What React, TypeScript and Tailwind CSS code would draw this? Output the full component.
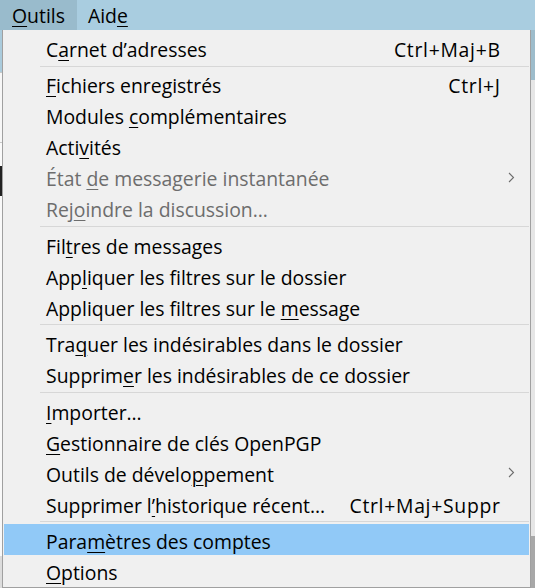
import React from "react";

type Item =
  | { sep: true }
  | {
      sep?: false;
      label: string;
      key: number; // index of the underlined letter
      shortcut?: string;
      disabled?: boolean;
      submenu?: boolean;
      active?: boolean;
    };

const items: Item[] = [
  { label: "Carnet d’adresses", key: 1, shortcut: "Ctrl+Maj+B" },
  { sep: true },
  { label: "Fichiers enregistrés", key: 0, shortcut: "Ctrl+J" },
  { label: "Modules complémentaires", key: 8 },
  { label: "Activités", key: 4 },
  { label: "État de messagerie instantanée", key: 5, disabled: true, submenu: true },
  { label: "Rejoindre la discussion…", key: 3, disabled: true },
  { sep: true },
  { label: "Filtres de messages", key: 3 },
  { label: "Appliquer les filtres sur le dossier", key: 3 },
  { label: "Appliquer les filtres sur le message", key: 29 },
  { sep: true },
  { label: "Traquer les indésirables dans le dossier", key: 3 },
  { label: "Supprimer les indésirables de ce dossier", key: 7 },
  { sep: true },
  { label: "Importer…", key: 0 },
  { label: "Gestionnaire de clés OpenPGP", key: 0 },
  { label: "Outils de développement", key: 16, submenu: true },
  { label: "Supprimer l’historique récent…", key: 11, shortcut: "Ctrl+Maj+Suppr" },
  { sep: true },
  { label: "Paramètres des comptes", key: 4, active: true },
  { label: "Options", key: 0 },
];

const Mnemonic = ({ text, at }: { text: string; at: number }) => (
  <>
    {text.slice(0, at)}
    <span className="underline decoration-1 underline-offset-[3px]">{text[at]}</span>
    {text.slice(at + 1)}
  </>
);

const Chevron = () => (
  <svg width="7" height="11" viewBox="0 0 7 11" className="text-[#6d6d6d]">
    <polyline points="1,1 5.5,5.5 1,10" fill="none" stroke="currentColor" strokeWidth="1.1" />
  </svg>
);

export default function App() {
  return (
    <div
      className="w-[535px] h-[588px] overflow-hidden bg-[#f0f0f0] text-[19.4px] text-black"
      style={{ fontFamily: '"Open Sans", "Noto Sans", sans-serif' }}
    >
      {/* barre de menus */}
      <div className="flex h-[30px] bg-[#a9cde0]">
        <div className="flex items-center px-[12px] pt-[2px] bg-[#99bbcc]">
          <Mnemonic text="Outils" at={0} />
        </div>
        <div className="flex items-center px-[11px] pt-[2px]">
          <Mnemonic text="Aide" at={3} />
        </div>
      </div>

      <div className="flex h-[558px]">
        {/* fenêtre derrière, à gauche */}
        <div className="w-[2px] flex flex-col">
          <div className="h-[42px] bg-[#aacbdc]" />
          <div className="h-[70px] bg-[#f7f7f7] border-t border-[#c8c8c8]" />
          <div className="h-[24px] bg-[#fafafa] border-t border-[#c8c8c8]" />
          <div className="h-[30px] bg-[#222]" />
          <div className="flex-1 bg-[#f9f9f9]" />
          <div className="h-[32px] bg-[#dcdcdc]" />
        </div>

        {/* menu déroulant */}
        <div className="w-[529px] border border-t-0 border-[#a0a0a0] bg-[#f0f0f0] pt-[2.5px] px-px">
          {items.map((it, i) =>
            it.sep ? (
              <div key={i} className="h-[5.4px] flex items-center pl-[36px]">
                <div className="h-px w-full bg-[#d7d7d7]" />
              </div>
            ) : (
              <div
                key={i}
                className={`h-[31px] flex items-center justify-between pl-[42px] pr-[29px] pt-[3px] whitespace-nowrap ${
                  it.active ? "bg-[#91c9f7]" : ""
                } ${it.disabled ? "text-[#6d6d6d]" : ""}`}
              >
                <span>
                  <Mnemonic text={it.label} at={it.key} />
                </span>
                {it.shortcut && <span className="tracking-[0.7px] -mr-[0.7px]">{it.shortcut}</span>}
                {it.submenu && (
                  <span className="-mr-[15px] -mt-[3px]">
                    <Chevron />
                  </span>
                )}
              </div>
            )
          )}
        </div>

        {/* ombre / fenêtre derrière, à droite */}
        <div className="w-[4px] flex flex-col">
          <div className="h-[50px] bg-[#9dbccb]" />
          <div className="flex-1 bg-[#e6e6e6]" />
          <div className="h-[52px] bg-[#a8a8a8]" />
        </div>
      </div>
    </div>
  );
}
